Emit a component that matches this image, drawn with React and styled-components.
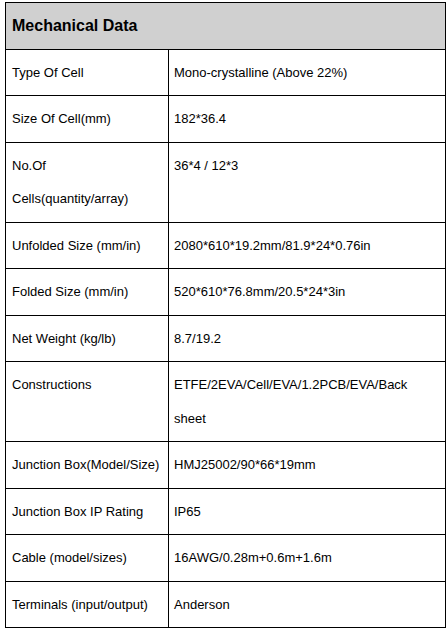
import React from 'react';
import styled, { createGlobalStyle } from 'styled-components';

const GlobalStyle = createGlobalStyle`
  html, body {
    margin: 0;
    padding: 0;
    background: #ffffff;
  }
  body {
    font-family: "Liberation Sans", Arial, sans-serif;
    color: #000;
  }
`;

const Page = styled.div`
  padding: 2px 2px 0 5px;
`;

const Table = styled.table`
  width: 441px;
  border-collapse: collapse;
  table-layout: fixed;
  font-family: "Liberation Sans", Arial, sans-serif;
`;

const HeadCell = styled.th`
  background: #d0d0d0;
  border: 1px solid #000;
  height: 45.5px;
  padding: 0 6px;
  text-align: left;
  font-size: 16px;
  font-weight: bold;
  color: #000;
`;

const Cell = styled.td`
  border: 1px solid #000;
  padding: 6px 6px 6px ${(p) => (p.$value ? '5px' : '6px')};
  font-size: 13px;
  line-height: 33.5px;
  vertical-align: top;
  color: #000;
`;

const rows = [
  ['Type Of Cell', 'Mono-crystalline (Above 22%)'],
  ['Size Of Cell(mm)', '182*36.4'],
  ['No.Of Cells(quantity/array)', '36*4 / 12*3'],
  ['Unfolded Size (mm/in)', '2080*610*19.2mm/81.9*24*0.76in'],
  ['Folded Size (mm/in)', '520*610*76.8mm/20.5*24*3in'],
  ['Net Weight (kg/lb)', '8.7/19.2'],
  ['Constructions', <>ETFE/2EVA/Cell/EVA/1.2PCB/EVA/Back<br />sheet</>],
  ['Junction Box(Model/Size)', 'HMJ25002/90*66*19mm'],
  ['Junction Box IP Rating', 'IP65'],
  ['Cable (model/sizes)', '16AWG/0.28m+0.6m+1.6m'],
  ['Terminals (input/output)', 'Anderson'],
];

const App = () => (
  <Page>
    <GlobalStyle />
    <Table>
      <colgroup>
        <col style={{ width: '163px' }} />
        <col />
      </colgroup>
      <thead>
        <tr>
          <HeadCell colSpan={2}>Mechanical Data</HeadCell>
        </tr>
      </thead>
      <tbody>
        {rows.map(([label, value], i) => (
          <tr key={i}>
            <Cell>{label}</Cell>
            <Cell $value>{value}</Cell>
          </tr>
        ))}
      </tbody>
    </Table>
  </Page>
);

export default App;
